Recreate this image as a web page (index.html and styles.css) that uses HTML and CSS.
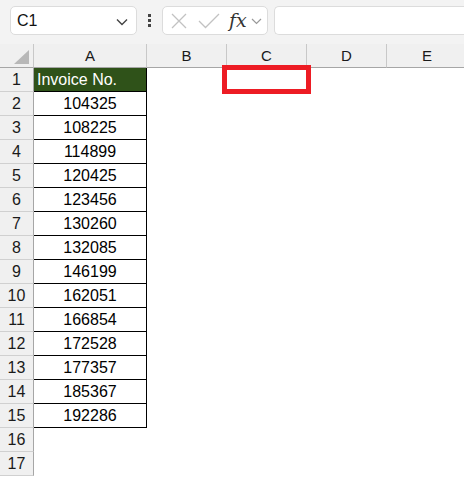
FILE: index.html
```html
<!DOCTYPE html>
<html>
<head>
<meta charset="utf-8">
<link rel="stylesheet" href="styles.css">
</head>
<body>
<div class="topbar">
  <div class="namebox">
    <span class="nb-text">C1</span>
    <svg class="chev" width="12" height="8" viewBox="0 0 12 8"><path d="M1 1.5 L6 6.5 L11 1.5" fill="none" stroke="#444" stroke-width="1.4"/></svg>
  </div>
  <div class="vdots"><i></i><i></i><i></i></div>
  <div class="fxbox">
    <svg class="ico" width="18" height="18" viewBox="0 0 18 18"><path d="M2 2 L16 16 M16 2 L2 16" stroke="#c2c2c2" stroke-width="1.3" fill="none"/></svg>
    <svg class="ico" width="24" height="18" viewBox="0 0 24 18"><path d="M2 9 L8.5 15.5 L22 2" stroke="#c2c2c2" stroke-width="1.3" fill="none"/></svg>
    <span class="fx">fx</span>
    <svg class="chev2" width="11" height="7" viewBox="0 0 11 7"><path d="M1 1 L5.5 5.5 L10 1" fill="none" stroke="#999" stroke-width="1.2"/></svg>
  </div>
  <div class="formula"></div>
</div>
<div class="sheet">
  <div class="corner"><span class="tri"></span></div>
  <div class="colh">A</div>
  <div class="colh">B</div>
  <div class="colh">C</div>
  <div class="colh">D</div>
  <div class="colh last">E</div>

  <div class="rowh">1</div><div class="cell a head">Invoice No.</div><div class="cell"></div><div class="cell c1"></div><div class="cell"></div><div class="cell"></div>
  <div class="rowh">2</div><div class="cell a">104325</div><div class="cell"></div><div class="cell"></div><div class="cell"></div><div class="cell"></div>
  <div class="rowh">3</div><div class="cell a">108225</div><div class="cell"></div><div class="cell"></div><div class="cell"></div><div class="cell"></div>
  <div class="rowh">4</div><div class="cell a">114899</div><div class="cell"></div><div class="cell"></div><div class="cell"></div><div class="cell"></div>
  <div class="rowh">5</div><div class="cell a">120425</div><div class="cell"></div><div class="cell"></div><div class="cell"></div><div class="cell"></div>
  <div class="rowh">6</div><div class="cell a">123456</div><div class="cell"></div><div class="cell"></div><div class="cell"></div><div class="cell"></div>
  <div class="rowh">7</div><div class="cell a">130260</div><div class="cell"></div><div class="cell"></div><div class="cell"></div><div class="cell"></div>
  <div class="rowh">8</div><div class="cell a">132085</div><div class="cell"></div><div class="cell"></div><div class="cell"></div><div class="cell"></div>
  <div class="rowh">9</div><div class="cell a">146199</div><div class="cell"></div><div class="cell"></div><div class="cell"></div><div class="cell"></div>
  <div class="rowh">10</div><div class="cell a">162051</div><div class="cell"></div><div class="cell"></div><div class="cell"></div><div class="cell"></div>
  <div class="rowh">11</div><div class="cell a">166854</div><div class="cell"></div><div class="cell"></div><div class="cell"></div><div class="cell"></div>
  <div class="rowh">12</div><div class="cell a">172528</div><div class="cell"></div><div class="cell"></div><div class="cell"></div><div class="cell"></div>
  <div class="rowh">13</div><div class="cell a">177357</div><div class="cell"></div><div class="cell"></div><div class="cell"></div><div class="cell"></div>
  <div class="rowh">14</div><div class="cell a">185367</div><div class="cell"></div><div class="cell"></div><div class="cell"></div><div class="cell"></div>
  <div class="rowh">15</div><div class="cell a">192286</div><div class="cell"></div><div class="cell"></div><div class="cell"></div><div class="cell"></div>
  <div class="rowh">16</div><div class="cell"></div><div class="cell"></div><div class="cell"></div><div class="cell"></div><div class="cell"></div>
  <div class="rowh">17</div><div class="cell"></div><div class="cell"></div><div class="cell"></div><div class="cell"></div><div class="cell"></div>

  <div class="redbox"></div>
</div>
</body>
</html>
```
FILE: styles.css
```css
html, body {
  margin: 0;
  padding: 0;
  background: #ffffff;
  font-family: "Liberation Sans", Arial, sans-serif;
  overflow: hidden;
}
.topbar {
  height: 44px;
  background: #f3f3f3;
  display: flex;
  align-items: flex-start;
  padding-top: 6px;
  box-sizing: border-box;
}
.namebox {
  margin-left: 10px;
  width: 127px;
  height: 29px;
  box-sizing: border-box;
  background: #fff;
  border: 1px solid #dcdcdc;
  border-radius: 5px;
  display: flex;
  align-items: center;
  justify-content: space-between;
  padding: 0 8px 0 6px;
}
.nb-text {
  font-size: 16px;
  color: #111;
}
.chev { margin-top: 2px; }
.vdots {
  width: 25px;
  height: 29px;
  display: flex;
  flex-direction: column;
  align-items: center;
  justify-content: center;
  gap: 2px;
}
.vdots i {
  display: block;
  width: 3px;
  height: 3px;
  background: #444;
}
.fxbox {
  width: 106px;
  height: 29px;
  box-sizing: border-box;
  background: #fff;
  border: 1px solid #dcdcdc;
  border-radius: 5px;
  display: flex;
  align-items: center;
  padding-left: 7px;
  gap: 9px;
}
.fx {
  font-family: "DejaVu Serif", "Liberation Serif", serif;
  font-style: italic;
  font-size: 19px;
  color: #333;
  margin-left: -1px;
  margin-top: -2px;
}
.chev2 { margin-left: -5px; margin-top: 2px; }
.formula {
  margin-left: 6px;
  flex: 1;
  height: 29px;
  box-sizing: border-box;
  background: #fff;
  border: 1px solid #dcdcdc;
  border-right: none;
  border-radius: 5px 0 0 5px;
}
.sheet {
  position: relative;
  display: grid;
  grid-template-columns: 34px 113px 80px 80px 80px 80px;
  grid-template-rows: 24px;
  grid-auto-rows: 24px;
}
.corner {
  background: #f0f0f0;
  border-bottom: 1px solid #a6a6a6;
  border-right: 1px solid #c8c8c8;
  box-sizing: border-box;
  position: relative;
}
.tri {
  position: absolute;
  right: 4px;
  bottom: 3px;
  width: 0;
  height: 0;
  border-left: 15px solid transparent;
  border-bottom: 14px solid #b8b8b8;
}
.colh {
  background: #f0f0f0;
  border-bottom: 1px solid #a6a6a6;
  border-right: 1px solid #c8c8c8;
  box-sizing: border-box;
  display: flex;
  align-items: center;
  justify-content: center;
  font-size: 15px;
  color: #1a1a1a;
}
.colh.last { border-right: none; }
.rowh {
  background: #f0f0f0;
  border-right: 1px solid #a6a6a6;
  border-bottom: 1px solid #d0d0d0;
  box-sizing: border-box;
  display: flex;
  align-items: center;
  justify-content: center;
  font-size: 16px;
  color: #1a1a1a;
}
.cell {
  box-sizing: border-box;
  background: #fff;
}
.cell.a {
  border-right: 1px solid #000;
  border-bottom: 1px solid #000;
  display: flex;
  align-items: center;
  justify-content: center;
  font-size: 16px;
  color: #000;
}
.cell.a.head {
  background: #2f5219;
  color: #ffffff;
  justify-content: flex-start;
  padding-left: 3px;
}
.cell.c1 {
  border-right: 1px solid #000;
}
.redbox {
  position: absolute;
  left: 222px;
  top: 21px;
  width: 89px;
  height: 29px;
  box-sizing: border-box;
  border: 5px solid #ed1c24;
}
```
